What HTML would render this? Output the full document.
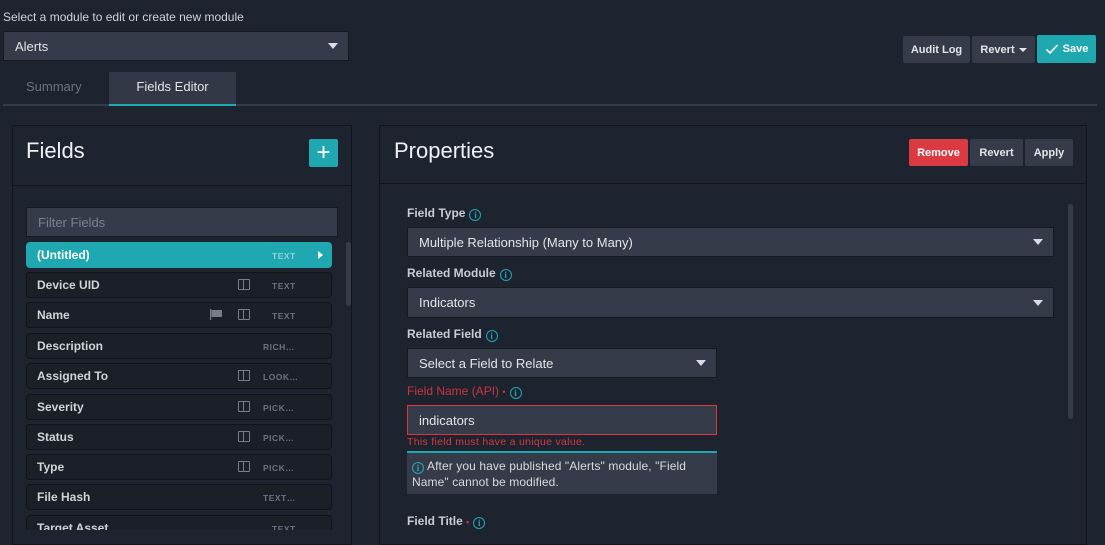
<!DOCTYPE html>
<html><head><style>
*{box-sizing:border-box;margin:0;padding:0}
body{width:1105px;height:537px;overflow:hidden;background:#1e2330;font-family:"Liberation Sans",sans-serif;color:#d8dbe0;position:relative}
.a{position:absolute}
.sel{background:#353b48;border:1px solid #151920;color:#e2e5ea;font-size:13px;padding-left:11px;display:flex;align-items:center}
.caret{position:absolute;right:10px;top:50%;margin-top:-3px;width:0;height:0;border-left:5px solid transparent;border-right:5px solid transparent;border-top:6px solid #d7dce6}
.btn{position:absolute;background:#353b48;color:#e2e5ea;font-size:11px;font-weight:bold;display:flex;align-items:center;justify-content:center;border-radius:2px}
.row{position:absolute;left:26px;width:306px;height:26px;background:#1a1f28;border:1px solid #10141a;border-radius:4px;font-size:12px;font-weight:bold;color:#d0d3d8;padding-left:10px;display:flex;align-items:center}
.t{position:absolute;left:245px;font-size:8.5px;color:#6c7280;font-weight:bold;letter-spacing:.5px}
.col{position:absolute;left:211px;top:6px;width:12px;height:11px;border:1.5px solid #777d88;border-radius:1px}
.col:after{content:"";position:absolute;left:3.5px;top:0;height:100%;border-left:1.5px solid #777d88}
.lbl{position:absolute;left:407px;font-size:12px;font-weight:bold;color:#c8ccd3}
.i{display:inline-block;width:12px;height:12px;border:1.3px solid #22a8b4;border-radius:50%;color:#22a8b4;font-size:9px;text-align:center;line-height:10px;vertical-align:-1px;margin-left:4px;font-weight:bold;font-family:"Liberation Serif",serif}
</style></head><body>
<div class="a" style="left:3px;top:10px;font-size:12px;color:#d0d3d8">Select a module to edit or create new module</div>
<div class="a sel" style="left:3px;top:31px;width:346px;height:30px">Alerts<span class="caret"></span></div>

<div class="btn" style="left:903px;top:36px;width:67px;height:27px">Audit Log</div>
<div class="btn" style="left:972px;top:36px;width:63px;height:27px">Revert <span style="margin-left:4px;border-left:4px solid transparent;border-right:4px solid transparent;border-top:4px solid #e2e5ea"></span></div>
<div class="btn" style="left:1037px;top:35px;width:59px;height:28px;background:#20a8b1;color:#fff"><svg width="14" height="12" viewBox="0 0 14 12" style="margin-right:4px"><path d="M1.5 6.5 L5 10 L12.5 2" stroke="#fff" stroke-width="1.6" fill="none"/></svg>Save</div>

<div class="a" style="left:3px;top:104px;width:1094px;height:2px;background:#353b48"></div>
<div class="a" style="left:26px;top:79px;font-size:13px;color:#6c7280">Summary</div>
<div class="a" style="left:109px;top:72px;width:127px;height:34px;background:#323846;border-bottom:2px solid #20a8b1;color:#e2e5ea;font-size:13px;text-align:center;line-height:30px">Fields Editor</div>

<div class="a" style="left:12px;top:125px;width:340px;height:420px;border:1px solid #11151b;background:#1e2330"></div>
<div class="a" style="left:13px;top:185px;width:338px;height:1px;background:#11151b"></div>
<div class="a" style="left:26px;top:138px;font-size:22px;color:#eef0f3">Fields</div>
<div class="a" style="left:309px;top:139px;width:29px;height:28px;background:#20a8b1;border-radius:2px;color:#fff;font-size:24px;line-height:27px;text-align:center">+</div>
<div class="a sel" style="left:26px;top:207px;width:312px;height:30px;color:#7c828d;font-size:13px">Filter Fields</div>
<div class="a" style="left:346px;top:242px;width:5px;height:64px;background:#353b48;border-radius:3px"></div>

<div class="a" style="left:13px;top:240px;width:338px;height:290px;overflow:hidden">
<div style="position:relative;left:-13px;top:-240px">
<div class="row" style="top:242px;background:#20a8b1;border-color:#20a8b1;color:#fff">(Untitled)<span class="t" style="top:8px;color:#8fd3d8">TEXT</span><span class="a" style="left:291px;top:8px;border-top:4px solid transparent;border-bottom:4px solid transparent;border-left:5px solid #fff"></span></div>
<div class="row" style="top:272px">Device UID<span class="col"></span><span class="t" style="top:8px">TEXT</span></div>
<div class="row" style="top:302px">Name<svg class="a" style="left:183px;top:6px" width="13" height="11" viewBox="0 0 13 11"><path d="M0.5 0 V11" stroke="#777d88" stroke-width="1.4"/><path d="M1.5 1 H12 V8 H1.5Z" fill="#777d88"/></svg><span class="col"></span><span class="t" style="top:8px">TEXT</span></div>
<div class="row" style="top:333px">Description<span class="t" style="top:8px;left:236px">RICH…</span></div>
<div class="row" style="top:363px">Assigned To<span class="col"></span><span class="t" style="top:8px;left:236px">LOOK…</span></div>
<div class="row" style="top:394px">Severity<span class="col"></span><span class="t" style="top:8px;left:236px">PICK…</span></div>
<div class="row" style="top:424px">Status<span class="col"></span><span class="t" style="top:8px;left:236px">PICK…</span></div>
<div class="row" style="top:454px">Type<span class="col"></span><span class="t" style="top:8px;left:236px">PICK…</span></div>
<div class="row" style="top:484px">File Hash<span class="t" style="top:8px;left:236px">TEXT…</span></div>
<div class="row" style="top:515px">Target Asset<span class="t" style="top:8px">TEXT</span></div>
</div></div>

<div class="a" style="left:379px;top:125px;width:708px;height:420px;border:1px solid #11151b"></div>
<div class="a" style="left:380px;top:183px;width:706px;height:1px;background:#11151b"></div>
<div class="a" style="left:394px;top:138px;font-size:22px;color:#eef0f3">Properties</div>
<div class="btn" style="left:909px;top:139px;width:59px;height:27px;background:#dc3a42;color:#fff">Remove</div>
<div class="btn" style="left:970px;top:139px;width:53px;height:27px">Revert</div>
<div class="btn" style="left:1025px;top:139px;width:48px;height:27px">Apply</div>
<div class="a" style="left:1068px;top:204px;width:5px;height:215px;background:#353b48;border-radius:3px"></div>

<div class="lbl" style="top:206px">Field Type<span class="i">i</span></div>
<div class="a sel" style="left:407px;top:227px;width:647px;height:30px">Multiple Relationship (Many to Many)<span class="caret"></span></div>
<div class="lbl" style="top:266px">Related Module<span class="i">i</span></div>
<div class="a sel" style="left:407px;top:287px;width:647px;height:31px">Indicators<span class="caret"></span></div>
<div class="lbl" style="top:327px">Related Field<span class="i">i</span></div>
<div class="a sel" style="left:407px;top:348px;width:310px;height:30px">Select a Field to Relate<span class="caret"></span></div>
<div class="lbl" style="top:384px;color:#c9363d;font-weight:normal">Field Name (API) <span style="font-size:9px">•</span><span class="i">i</span></div>
<div class="a sel" style="left:407px;top:405px;width:310px;height:30px;border-color:#d8383f">indicators</div>
<div class="a" style="left:407px;top:436px;font-size:10.5px;color:#d23a40;letter-spacing:.3px">This field must have a unique value.</div>
<div class="a" style="left:407px;top:451px;width:310px;height:43px;background:#353b48;border-top:2px solid #20a8b1;font-size:12px;color:#d8dbe0;padding:5px 14px 5px 5px;line-height:16px;letter-spacing:.1px"><span class="i" style="margin-left:0;margin-right:3px">i</span>After you have published "Alerts" module, "Field Name" cannot be modified.</div>
<div class="lbl" style="top:514px">Field Title <span style="font-size:9px;color:#c9363d">•</span><span class="i">i</span></div>
</body></html>
